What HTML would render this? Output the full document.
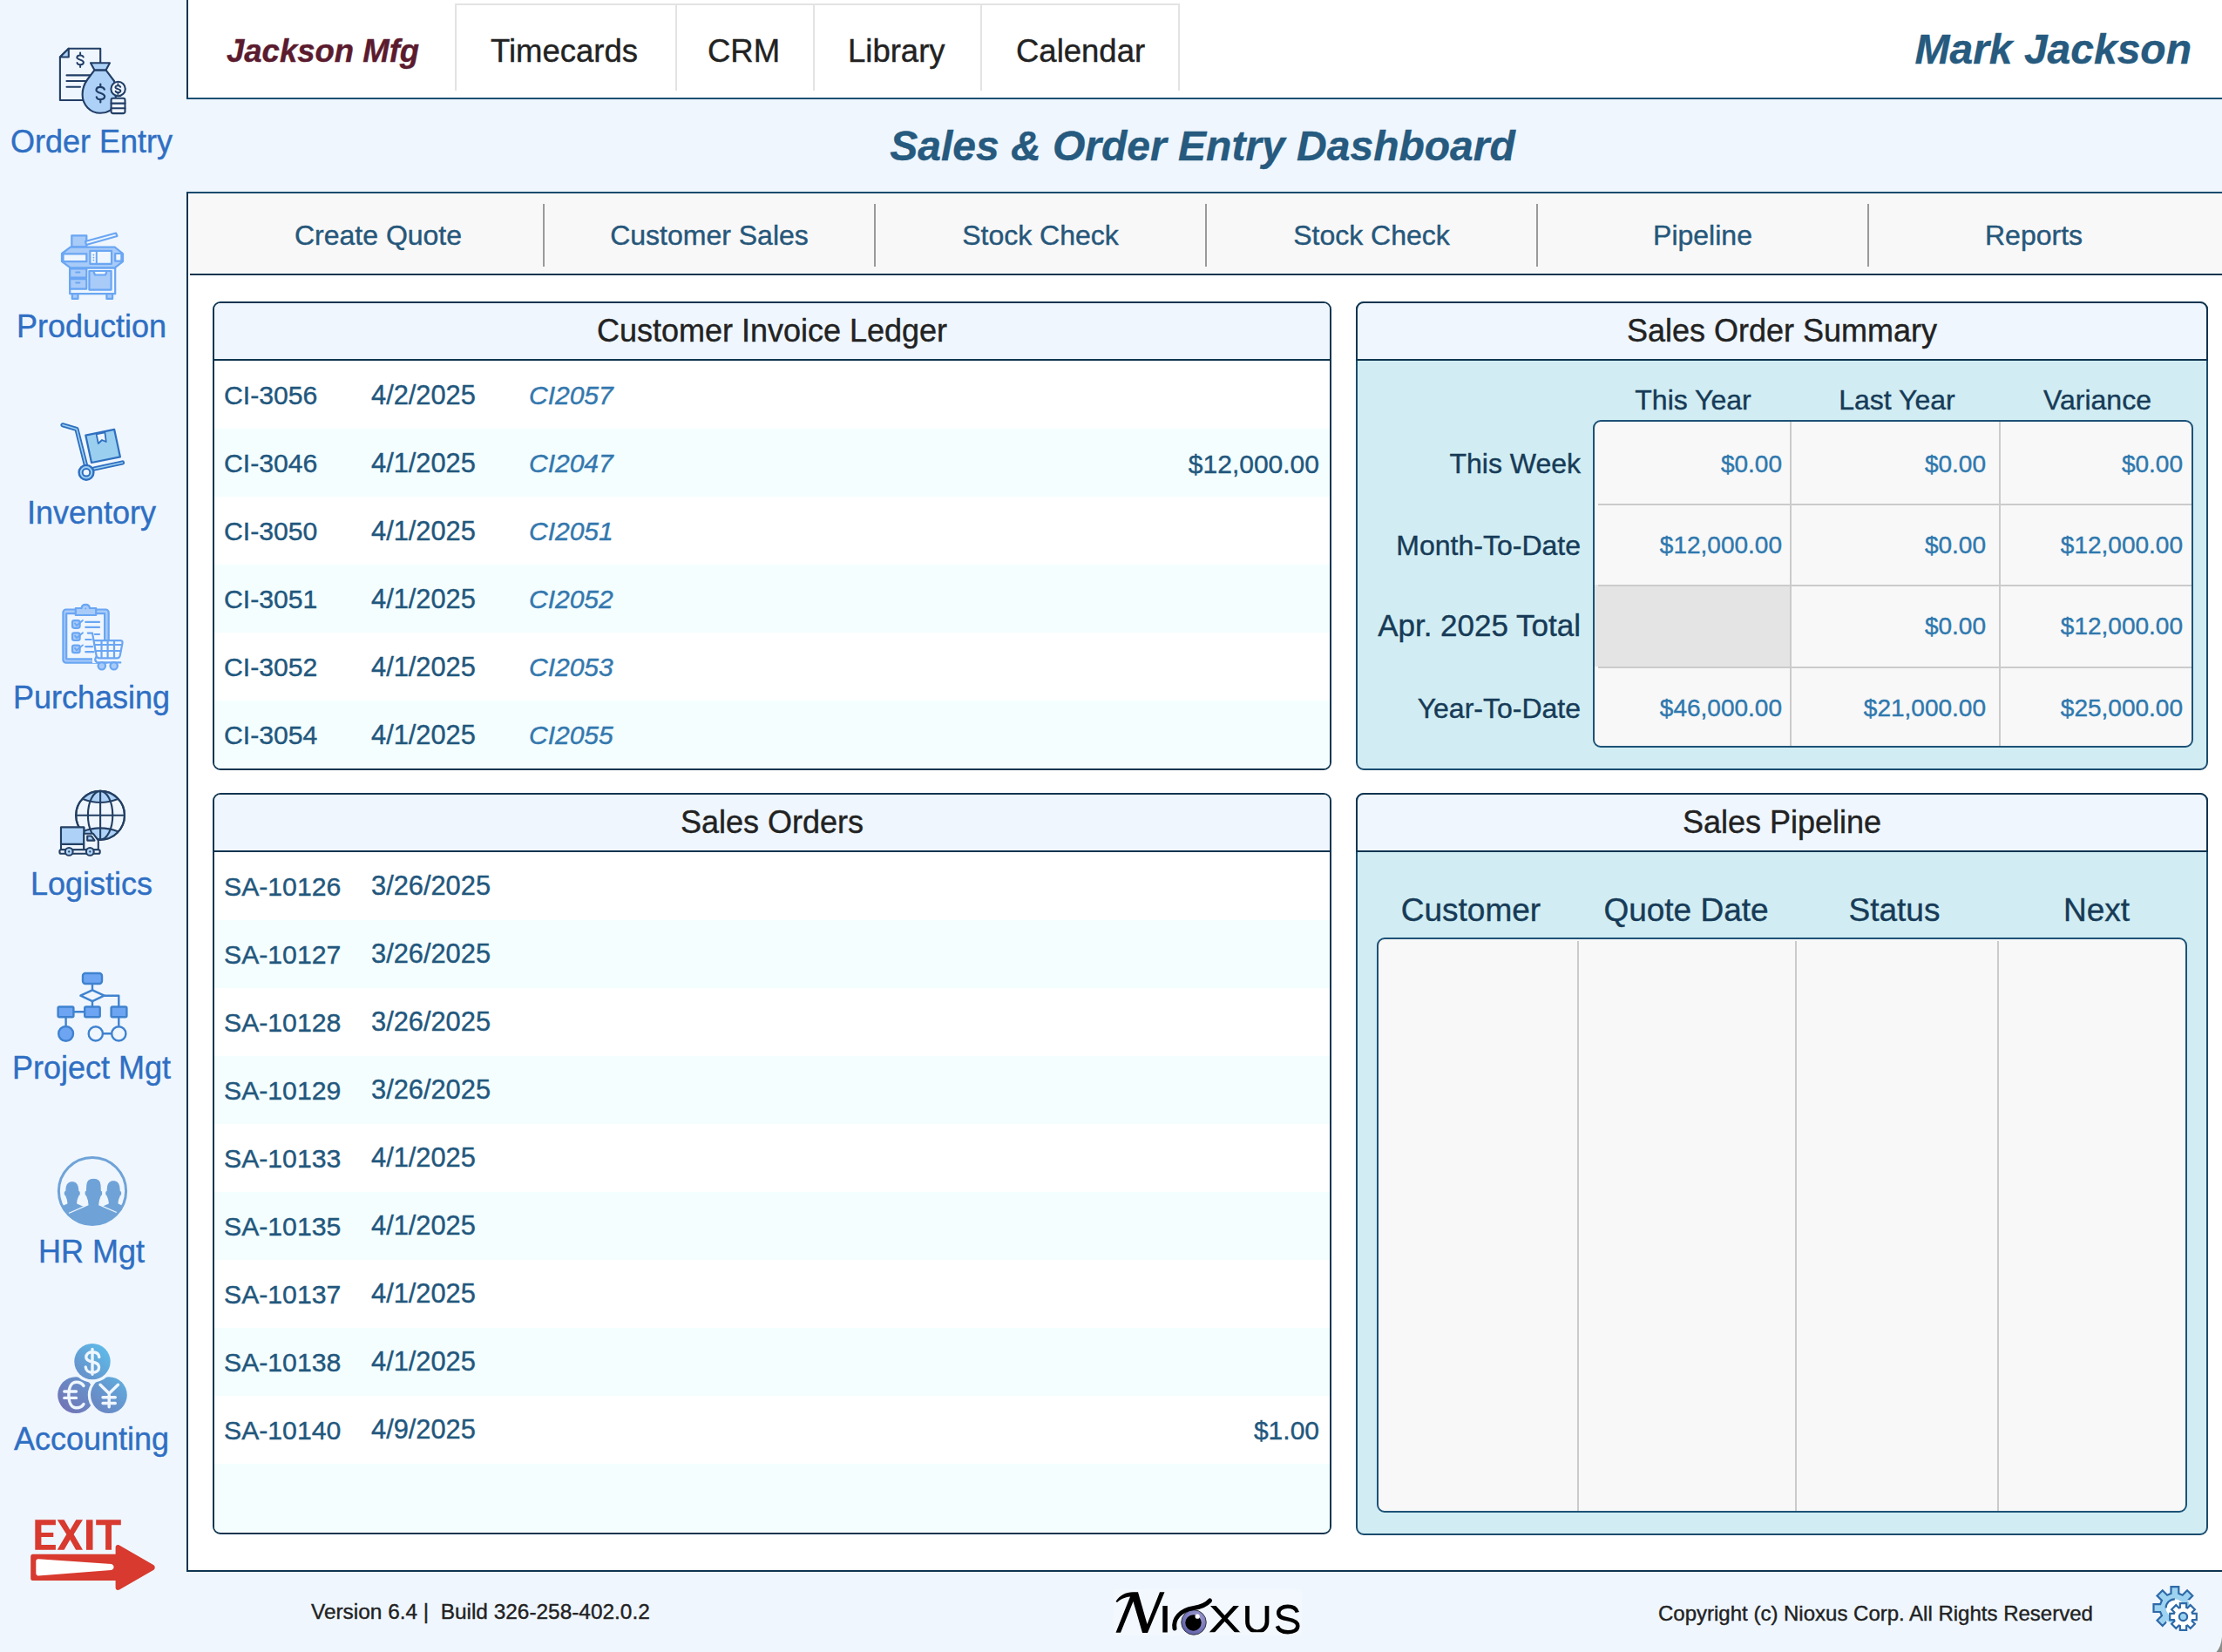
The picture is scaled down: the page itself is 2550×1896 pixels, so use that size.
<!DOCTYPE html>
<html><head><meta charset="utf-8">
<style>
html,body{margin:0;padding:0;}
body{width:2550px;height:1896px;position:relative;overflow:hidden;background:#EFF6FE;font-family:"Liberation Sans",sans-serif;}
.a{position:absolute;box-sizing:border-box;}
.t{position:absolute;white-space:nowrap;line-height:1;-webkit-text-stroke:0.4px currentColor;}
.c{text-align:center;}
.r{text-align:right;}
#hdr{left:214px;top:0;width:2336px;height:114px;background:#fff;border-left:2px solid #0F3550;border-bottom:2px solid #1D5073;}
#tabs{left:522px;top:4px;width:832px;height:100px;border:2px solid #E3E3E3;border-bottom:none;}
.tdiv{position:absolute;top:4px;width:2px;height:100px;background:#E3E3E3;}
#main{left:214px;top:220px;width:2336px;height:1584px;background:#fff;border-left:2px solid #0F3550;border-top:2px solid #164A6E;border-bottom:2px solid #0F3550;}
#nav{left:218px;top:222px;width:2332px;height:94px;background:#F8F8F8;border-bottom:2px solid #0F3550;}
.ndiv{position:absolute;top:234px;width:2px;height:72px;background:#9A9A9A;}
.pan{position:absolute;box-sizing:border-box;border:2px solid #0F3550;border-radius:9px;overflow:hidden;}
.ph{position:absolute;left:0;top:0;right:0;height:66px;background:#EFF6FE;border-bottom:2px solid #0F3550;box-sizing:border-box;}
.row{position:absolute;left:0;right:0;height:78px;}
.alt{background:#F4FEFF;}
.side{color:#2F6FC3;font-size:36px;width:214px;left:0;text-align:center;}
.tab{color:#222;font-size:36.5px;}
.nv{color:#26577A;font-size:32px;width:380px;text-align:center;}
.pt{color:#222;font-size:36px;}
.rt{color:#22577D;font-size:31px;}
.it{color:#3478AE;font-size:30px;font-style:italic;}
.sh{color:#173B57;font-size:32px;}
.sv{color:#2F78AE;font-size:28px;}
.gh{color:#173B57;font-size:37px;}
</style></head>
<body>
<!-- header -->
<div class="a" id="hdr"></div>
<div class="a" id="tabs"></div>
<div class="tdiv" style="left:775px"></div>
<div class="tdiv" style="left:933px"></div>
<div class="tdiv" style="left:1125px"></div>
<div class="t" style="left:260px;top:41px;font-size:36.5px;font-weight:bold;font-style:italic;color:#5B1B2E;">Jackson Mfg</div>
<div class="t tab" style="left:563px;top:41px;">Timecards</div>
<div class="t tab" style="left:812px;top:41px;">CRM</div>
<div class="t tab" style="left:973px;top:41px;">Library</div>
<div class="t tab" style="left:1166px;top:41px;">Calendar</div>
<div class="t r" style="right:35px;top:33px;font-size:48px;font-weight:bold;font-style:italic;color:#265A7E;">Mark Jackson</div>
<div class="t c" style="left:880px;width:1000px;top:144px;font-size:48px;font-weight:bold;font-style:italic;color:#265A7E;">Sales &amp; Order Entry Dashboard</div>

<!-- main -->
<div class="a" id="main"></div>
<div class="a" id="nav"></div>
<div class="ndiv" style="left:623px"></div>
<div class="ndiv" style="left:1003px"></div>
<div class="ndiv" style="left:1383px"></div>
<div class="ndiv" style="left:1763px"></div>
<div class="ndiv" style="left:2143px"></div>
<div class="t nv" style="left:244px;top:254px;">Create Quote</div>
<div class="t nv" style="left:624px;top:254px;">Customer Sales</div>
<div class="t nv" style="left:1004px;top:254px;">Stock Check</div>
<div class="t nv" style="left:1384px;top:254px;">Stock Check</div>
<div class="t nv" style="left:1764px;top:254px;">Pipeline</div>
<div class="t nv" style="left:2144px;top:254px;">Reports</div>

<!-- PANELS -->
<div class="pan" style="left:244px;top:346px;width:1284px;height:538px;background:#fff;">
<div class="ph"></div>
<div class="row" style="top:66px"></div>
<div class="row alt" style="top:144px"></div>
<div class="row" style="top:222px"></div>
<div class="row alt" style="top:300px"></div>
<div class="row" style="top:378px"></div>
<div class="row alt" style="top:456px"></div>
</div>
<div class="t c pt" style="left:244px;width:1284px;top:362px;">Customer Invoice Ledger</div>
<div class="t rt" style="left:257px;top:439px;font-size:30.2px;">CI-3056</div><div class="t rt" style="left:426px;top:439px;font-size:30.8px;">4/2/2025</div><div class="t it" style="left:607px;top:439px;">CI2057</div>
<div class="t rt" style="left:257px;top:517px;font-size:30.2px;">CI-3046</div><div class="t rt" style="left:426px;top:517px;font-size:30.8px;">4/1/2025</div><div class="t it" style="left:607px;top:517px;">CI2047</div><div class="t rt r" style="font-size:30px;right:1036px;top:518px;">$12,000.00</div>
<div class="t rt" style="left:257px;top:595px;font-size:30.2px;">CI-3050</div><div class="t rt" style="left:426px;top:595px;font-size:30.8px;">4/1/2025</div><div class="t it" style="left:607px;top:595px;">CI2051</div>
<div class="t rt" style="left:257px;top:673px;font-size:30.2px;">CI-3051</div><div class="t rt" style="left:426px;top:673px;font-size:30.8px;">4/1/2025</div><div class="t it" style="left:607px;top:673px;">CI2052</div>
<div class="t rt" style="left:257px;top:751px;font-size:30.2px;">CI-3052</div><div class="t rt" style="left:426px;top:751px;font-size:30.8px;">4/1/2025</div><div class="t it" style="left:607px;top:751px;">CI2053</div>
<div class="t rt" style="left:257px;top:829px;font-size:30.2px;">CI-3054</div><div class="t rt" style="left:426px;top:829px;font-size:30.8px;">4/1/2025</div><div class="t it" style="left:607px;top:829px;">CI2055</div>
<div class="pan" style="left:244px;top:910px;width:1284px;height:851px;background:#fff;">
<div class="ph"></div>
<div class="row" style="top:66px"></div>
<div class="row alt" style="top:144px"></div>
<div class="row" style="top:222px"></div>
<div class="row alt" style="top:300px"></div>
<div class="row" style="top:378px"></div>
<div class="row alt" style="top:456px"></div>
<div class="row" style="top:534px"></div>
<div class="row alt" style="top:612px"></div>
<div class="row" style="top:690px"></div>
<div class="row alt" style="top:768px"></div>
</div>
<div class="t c pt" style="left:244px;width:1284px;top:926px;">Sales Orders</div>
<div class="t rt" style="left:257px;top:1003px;font-size:30.2px;">SA-10126</div><div class="t rt" style="left:426px;top:1002px;font-size:30.8px;">3/26/2025</div>
<div class="t rt" style="left:257px;top:1081px;font-size:30.2px;">SA-10127</div><div class="t rt" style="left:426px;top:1080px;font-size:30.8px;">3/26/2025</div>
<div class="t rt" style="left:257px;top:1159px;font-size:30.2px;">SA-10128</div><div class="t rt" style="left:426px;top:1158px;font-size:30.8px;">3/26/2025</div>
<div class="t rt" style="left:257px;top:1237px;font-size:30.2px;">SA-10129</div><div class="t rt" style="left:426px;top:1236px;font-size:30.8px;">3/26/2025</div>
<div class="t rt" style="left:257px;top:1315px;font-size:30.2px;">SA-10133</div><div class="t rt" style="left:426px;top:1314px;font-size:30.8px;">4/1/2025</div>
<div class="t rt" style="left:257px;top:1393px;font-size:30.2px;">SA-10135</div><div class="t rt" style="left:426px;top:1392px;font-size:30.8px;">4/1/2025</div>
<div class="t rt" style="left:257px;top:1471px;font-size:30.2px;">SA-10137</div><div class="t rt" style="left:426px;top:1470px;font-size:30.8px;">4/1/2025</div>
<div class="t rt" style="left:257px;top:1549px;font-size:30.2px;">SA-10138</div><div class="t rt" style="left:426px;top:1548px;font-size:30.8px;">4/1/2025</div>
<div class="t rt" style="left:257px;top:1627px;font-size:30.2px;">SA-10140</div><div class="t rt" style="left:426px;top:1626px;font-size:30.8px;">4/9/2025</div><div class="t rt r" style="font-size:30px;right:1036px;top:1627px;">$1.00</div>
<div class="pan" style="left:1556px;top:346px;width:978px;height:538px;background:#D1EDF3;border-color:#1B4C6F;"></div>
<div class="a" style="left:1556px;top:346px;width:978px;height:68px;background:#EFF6FE;border:2px solid #0F3550;border-radius:9px 9px 0 0;"></div>
<div class="t c pt" style="left:1556px;width:978px;top:362px;">Sales Order Summary</div>
<div class="t c sh" style="left:1793px;width:300px;top:443px;">This Year</div>
<div class="t c sh" style="left:2027px;width:300px;top:443px;">Last Year</div>
<div class="t c sh" style="left:2257px;width:300px;top:443px;">Variance</div>
<div class="a" style="left:1828px;top:482px;width:689px;height:376px;background:#F8F8F8;border:2px solid #1D5277;border-radius:9px;overflow:hidden;"><div class="a" style="left:0;top:187px;width:224px;height:94px;background:#E4E4E4;"></div><div class="a" style="left:4px;top:94px;width:681px;height:2px;background:#CBCBCB;"></div><div class="a" style="left:4px;top:187px;width:681px;height:2px;background:#CBCBCB;"></div><div class="a" style="left:4px;top:281px;width:681px;height:2px;background:#CBCBCB;"></div><div class="a" style="left:224px;top:0;width:2px;height:372px;background:#CBCBCB;"></div><div class="a" style="left:464px;top:0;width:2px;height:372px;background:#CBCBCB;"></div></div>
<div class="t r sh" style="right:736px;top:516px;">This Week</div><div class="t r sv" style="right:505px;top:519px;">$0.00</div><div class="t r sv" style="right:271px;top:519px;">$0.00</div><div class="t r sv" style="right:45px;top:519px;">$0.00</div>
<div class="t r sh" style="right:736px;top:610px;">Month-To-Date</div><div class="t r sv" style="right:505px;top:612px;">$12,000.00</div><div class="t r sv" style="right:271px;top:612px;">$0.00</div><div class="t r sv" style="right:45px;top:612px;">$12,000.00</div>
<div class="t r sh" style="right:736px;top:700px;font-size:35px;">Apr. 2025 Total</div><div class="t r sv" style="right:271px;top:705px;">$0.00</div><div class="t r sv" style="right:45px;top:705px;">$12,000.00</div>
<div class="t r sh" style="right:736px;top:797px;">Year-To-Date</div><div class="t r sv" style="right:505px;top:799px;">$46,000.00</div><div class="t r sv" style="right:271px;top:799px;">$21,000.00</div><div class="t r sv" style="right:45px;top:799px;">$25,000.00</div>
<div class="pan" style="left:1556px;top:910px;width:978px;height:852px;background:#D1EDF3;border-color:#1B4C6F;"></div>
<div class="a" style="left:1556px;top:910px;width:978px;height:68px;background:#EFF6FE;border:2px solid #0F3550;border-radius:9px 9px 0 0;"></div>
<div class="t c pt" style="left:1556px;width:978px;top:926px;">Sales Pipeline</div>
<div class="t c gh" style="left:1538px;width:300px;top:1026px;">Customer</div>
<div class="t c gh" style="left:1785px;width:300px;top:1026px;">Quote Date</div>
<div class="t c gh" style="left:2024px;width:300px;top:1026px;">Status</div>
<div class="t c gh" style="left:2256px;width:300px;top:1026px;">Next</div>
<div class="a" style="left:1580px;top:1076px;width:930px;height:660px;background:#F8F8F8;border:2px solid #1D5277;border-radius:9px;overflow:hidden;"><div class="a" style="left:228px;top:2px;width:2px;height:656px;background:#CBCBCB;"></div><div class="a" style="left:478px;top:2px;width:2px;height:656px;background:#CBCBCB;"></div><div class="a" style="left:710px;top:2px;width:2px;height:656px;background:#CBCBCB;"></div></div>
<!-- SIDEBAR -->
<div class="t side" style="margin-left:-2px;top:145px;">Order Entry</div>
<div class="t side" style="margin-left:-2px;top:357px;">Production</div>
<div class="t side" style="margin-left:-2px;top:571px;">Inventory</div>
<div class="t side" style="margin-left:-2px;top:783px;">Purchasing</div>
<div class="t side" style="margin-left:-2px;top:997px;">Logistics</div>
<div class="t side" style="margin-left:-2px;top:1208px;">Project Mgt</div>
<div class="t side" style="margin-left:-2px;top:1419px;">HR Mgt</div>
<div class="t side" style="margin-left:-2px;top:1634px;">Accounting</div>
<div class="t" style="left:357px;top:1838px;font-size:24.4px;color:#222;">Version 6.4 |&nbsp; Build 326-258-402.0.2</div>
<div class="t" style="left:1903px;top:1840px;font-size:24px;color:#222;">Copyright (c) Nioxus Corp. All Rights Reserved</div>
<!-- ICONS -->
<svg class="a" style="left:60px;top:45px" width="94" height="95" viewBox="60 45 94 95">
<g fill="none" stroke="#223E66" stroke-width="2.1" stroke-linejoin="round" stroke-linecap="round">
<path d="M78.8 55.8 H115.2 V73"/>
<path d="M78.8 55.8 L68.9 65.5 V115 H97"/>
<path d="M68.9 65.5 H78.8 V55.8 Z" fill="#AED2F7"/>
<path d="M76.5 86.4 H106 M76.5 93 H101 M76.5 99.8 H92"/>
<path d="M108.5 80.4 L100.5 91 C96.5 96.5 94.6 102 94.6 108.5 C94.6 120.5 103.8 129.8 115.3 129.8 C123 129.8 129.8 125.5 133.5 119 L131 93 L121.5 80.4 Z" fill="#AED2F7"/>
<path d="M104 72.2 H126 L121.5 80.4 H108.5 Z" fill="#AED2F7"/>
<circle cx="135.6" cy="102" r="8.2" fill="#EFF6FE"/>
<rect x="127.6" y="112.8" width="15.9" height="17.3" rx="2" fill="#EFF6FE"/>
<path d="M127.6 118.6 H143.5 M127.6 124.3 H143.5"/>
</g>
<g fill="none" stroke="#223E66" stroke-linecap="round">
<path d="M95.71 65.50 C94.76 62.68 88.30 62.50 88.30 66.10 C88.30 68.68 95.90 68.68 95.90 71.50 C95.90 75.10 89.06 74.92 88.49 72.10 M92.10 60.60 V63.30 M92.10 74.30 V77.00" stroke-width="2"/>
<path d="M119.86 102.60 C118.66 98.84 110.50 98.60 110.50 103.40 C110.50 106.84 120.10 106.84 120.10 110.60 C120.10 115.40 111.46 115.16 110.74 111.40 M115.30 96.60 V99.50 M115.30 114.50 V117.40" stroke-width="2.2"/>
<path d="M138.25 99.84 C137.50 97.81 132.40 97.69 132.40 100.27 C132.40 102.11 138.40 102.11 138.40 104.14 C138.40 106.72 133.00 106.59 132.55 104.56 M135.40 96.30 V98.40 M135.40 106.00 V108.10" stroke-width="1.9"/>
</g>
</svg>
<svg class="a" style="left:62px;top:258px" width="90" height="90" viewBox="62 258 90 90">
<g stroke="#6AA6F3" stroke-width="2.2" stroke-linejoin="round" fill="#A8CBF8">
<rect x="82.3" y="270.3" width="17" height="13" />
<path d="M98 277 L133 267.5 L134.5 271 L99 281 Z" fill="#EFF6FE"/>
<rect x="80.2" y="307.4" width="52" height="29.8" fill="#EFF6FE"/>
<path d="M80.8 283.7 H131.7 L141 291 V300.2 L131.7 307.4 H80.8 L71 300.2 V291 Z"/>
<rect x="72.5" y="291.4" width="26.8" height="8.8" fill="#EFF6FE"/>
<rect x="103.4" y="287.8" width="24.6" height="15" fill="#EFF6FE"/>
<rect x="111.9" y="289.9" width="14.5" height="11" fill="#EFF6FE" stroke="none"/>
<rect x="104.9" y="289.9" width="4.8" height="11" fill="#EFF6FE" stroke="none"/>
<path d="M110.8 288.5 V302" fill="none" stroke-width="2"/>
<g fill="#6AA6F3" stroke="none"><circle cx="107.4" cy="292.6" r="0.9"/><circle cx="107.4" cy="295.6" r="0.9"/><circle cx="107.4" cy="298.6" r="0.9"/></g>
<rect x="132.2" y="291" width="7.2" height="8.7" fill="#EFF6FE"/>
<rect x="80.2" y="308.4" width="19.1" height="10.3"/>
<rect x="80.2" y="320.2" width="19.1" height="11.4"/>
<rect x="102.4" y="311" width="25.2" height="21.6"/>
<path d="M87.3 312.5 H91.3 M87.3 324.5 H91.3" fill="none" stroke-linecap="round"/>
<path d="M107.6 312 L109 315.5 H121 L122.4 312" fill="#EFF6FE"/>
<rect x="82.8" y="337.2" width="6.7" height="5.7"/>
<rect x="122.4" y="337.2" width="6.7" height="5.7"/>
</g>
</svg>
<svg class="a" style="left:62px;top:478px" width="90" height="82" viewBox="62 478 90 82">
<g fill="none" stroke-linecap="round" stroke-linejoin="round">
<path d="M72 487.8 L88 492.6 L98.5 534 M108 538 L140.5 531" stroke="#2F6FC0" stroke-width="5.2"/>
<path d="M72 487.8 L88 492.6 L98.5 534 M108 538 L140.5 531" stroke="#9ACFF0" stroke-width="1.6"/>
<path d="M98.3 499.6 L131.2 492.9 L137.9 524.3 L105 531 Z" fill="#9ACFF0" stroke="#2F6FC0" stroke-width="2.2"/>
<path d="M110.6 498.3 L120.4 496.3 L121.8 507 L117 505 L112.8 509 Z" fill="#EFF6FE" stroke="#2F6FC0" stroke-width="1.8"/>
<circle cx="99" cy="542.3" r="8.4" fill="#9ACFF0" stroke="#2F6FC0" stroke-width="2.4"/>
<circle cx="99" cy="542.3" r="4.3" fill="#EFF6FE" stroke="#2F6FC0" stroke-width="2"/>
</g>
</svg>
<svg class="a" style="left:62px;top:686px" width="90" height="86" viewBox="62 686 90 86">
<g stroke="#6AA6F3" stroke-width="2.2" stroke-linejoin="round" stroke-linecap="round">
<rect x="72.4" y="699.5" width="52.3" height="61.2" rx="3.5" fill="#A8CBF8"/>
<rect x="76.2" y="704.1" width="43.9" height="52.2" fill="#EFF6FE"/>
<path d="M86.8 698 H93.5 A4.8 4.8 0 0 1 103 698 H110.2 V706 H86.8 Z" fill="#A8CBF8"/>
<circle cx="98.3" cy="698.3" r="0.9" fill="#6AA6F3" stroke="none"/>
<g fill="#A8CBF8">
<rect x="83" y="712.2" width="8.6" height="8.6" rx="2.2"/>
<rect x="83" y="726.4" width="8.6" height="8.6" rx="2.2"/>
<rect x="83" y="740.6" width="8.6" height="8.6" rx="2.2"/>
</g>
<path d="M86 715.5 L88 718 L95 712 M86 729.7 L88 732.2 L95 726.2 M86 743.9 L88 746.4 L95 740.4" fill="none" stroke-width="1.9"/>
<path d="M98.3 713.9 H114 M98.3 719.9 H114 M108.9 728 H114 M98.3 734 H104.8 M98.3 742.2 H106 M98.3 748.2 H107.5" fill="none"/>
<rect x="106" y="752.5" width="34" height="8.5" fill="#EFF6FE" stroke="none"/>
<path d="M100.8 726.6 H106 L110.5 752 Q111 755.3 114 755.3 H134.5 Q137 755.3 137.7 752.5 L140.5 738 Q141 735.1 138 735.1 H107.5" fill="#EFF6FE"/>
<path d="M108.5 740 H139.8 M109.5 747 H138.5 M116.5 735.5 V755 M123.6 735.5 V755 M131 735.5 V755" fill="none"/>
<path d="M110.3 754 Q107.8 757.8 111.5 760.4 H138.3" fill="none"/>
<circle cx="116.8" cy="764.3" r="4.2" fill="#A8CBF8"/>
<circle cx="130.7" cy="764.3" r="4.2" fill="#A8CBF8"/>
</g>
</svg>
<svg class="a" style="left:62px;top:900px" width="90" height="86" viewBox="62 900 90 86">
<g stroke="#233F63" stroke-width="2.1" stroke-linejoin="round" stroke-linecap="round">
<clipPath id="gclip"><circle cx="115.1" cy="935.8" r="27.9"/></clipPath>
<circle cx="115.1" cy="935.8" r="27.9" fill="#EFF6FE"/>
<g clip-path="url(#gclip)" stroke="none">
<path d="M95 917 Q115.1 925 135.2 917 L150 900 H80 Z" fill="#AED2F7"/>
<path d="M95 954.2 Q115.1 946.5 135.2 954.2 L150 975 H80 Z" fill="#AED2F7"/>
</g>
<circle cx="115.1" cy="935.8" r="27.9" fill="none"/>
<ellipse cx="115.1" cy="935.8" rx="14.2" ry="27.9" fill="none"/>
<path d="M115.1 908 V963.7 M87.2 935.8 H143" fill="none"/>
<path d="M95 917 Q115.1 925 135.2 917 M95 954.2 Q115.1 946.5 135.2 954.2" fill="none"/>
<rect x="70" y="949.5" width="26.3" height="25.7" fill="#EFF6FE"/>
<rect x="70" y="949.5" width="26.3" height="19.4" fill="#AED2F7"/>
<path d="M96.3 956.8 H107 L112.8 964.5 V975.2 H96.3 Z" fill="#EFF6FE"/>
<path d="M100.2 959.5 H105 L108.5 964.6 H100.2 Z" fill="#AED2F7"/>
<rect x="68.4" y="975.3" width="46.3" height="4.4" rx="1.8" fill="#EFF6FE"/>
<circle cx="79.2" cy="977.4" r="4.4" fill="#AED2F7"/>
<circle cx="103.3" cy="977.4" r="4.4" fill="#AED2F7"/>
<circle cx="79.2" cy="977.4" r="1.1" fill="#233F63" stroke="none"/>
<circle cx="103.3" cy="977.4" r="1.1" fill="#233F63" stroke="none"/>
</g>
</svg>
<svg class="a" style="left:60px;top:1110px" width="94" height="90" viewBox="60 1110 94 90">
<g stroke="#3F82CF" stroke-width="2.4" stroke-linejoin="round" fill="#6EA5F2">
<rect x="95" y="1117" width="22" height="12" rx="3"/>
<path d="M106 1129 V1136 M106 1149 V1155.3 M119.5 1142.7 H136.3 V1155.3 M84.4 1161.2 H97.2 M75.6 1167.2 V1177.5 M136.3 1167.2 V1177.5 M117.9 1186.2 H128" fill="none"/>
<path d="M92.4 1142.7 L106 1136.3 L119.6 1142.7 L106 1149.1 Z" fill="#EFF6FE"/>
<rect x="66.6" y="1155.5" width="17.8" height="11.7" rx="1.5"/>
<rect x="97.2" y="1155.5" width="17.5" height="11.7" rx="1.5"/>
<rect x="127.6" y="1155.5" width="17.8" height="11.7" rx="1.5"/>
<circle cx="75.6" cy="1186.4" r="8.4"/>
<circle cx="109.8" cy="1186.4" r="8.1" fill="#EFF6FE"/>
<circle cx="136.3" cy="1186.4" r="8.1" fill="#EFF6FE"/>
</g>
</svg>
<svg class="a" style="left:60px;top:1320px" width="94" height="94" viewBox="60 1320 94 94">
<defs><clipPath id="hclip"><circle cx="106" cy="1367" r="38.4"/></clipPath></defs>
<g clip-path="url(#hclip)" fill="#6FA3D8">
<path d="M75.50 1364.20 C75.90 1358.70 78.78 1356.20 82.80 1356.20 C86.81 1356.20 89.70 1358.70 90.10 1364.20 L90.40 1367.00 C92.40 1367.30 92.20 1372.00 90.30 1372.50 C89.70 1375.00 88.20 1376.60 88.20 1381.60 L118.20 1394.60 V1420 H47.40 V1394.60 L77.40 1381.60 C77.40 1376.60 75.90 1375.00 75.30 1372.50 C73.40 1372.00 73.20 1367.30 75.20 1367.00 Z"/>
<path d="M122.90 1363.30 C123.30 1357.80 126.18 1355.30 130.20 1355.30 C134.21 1355.30 137.10 1357.80 137.50 1363.30 L137.80 1367.00 C139.80 1367.30 139.60 1372.00 137.70 1372.50 C137.10 1375.00 135.60 1376.60 135.60 1381.60 L165.60 1394.60 V1420 H94.80 V1394.60 L124.80 1381.60 C124.80 1376.60 123.30 1375.00 122.70 1372.50 C120.80 1372.00 120.60 1367.30 122.60 1367.00 Z"/>
<path d="M98.60 1360.20 C99.00 1354.70 102.56 1352.20 107.40 1352.20 C112.24 1352.20 115.80 1354.70 116.20 1360.20 L116.50 1366.30 C118.40 1366.60 118.20 1372.30 116.40 1372.80 C115.40 1375.30 113.90 1377.80 113.90 1382.80 L153.90 1400.30 V1420 H60.90 V1400.30 L100.90 1382.80 C100.90 1377.80 99.40 1375.30 98.40 1372.80 C96.60 1372.30 96.40 1366.60 98.30 1366.30 Z" stroke="#EFF6FE" stroke-width="1.3"/>
</g>
<circle cx="106" cy="1367" r="38.6" fill="none" stroke="#6FA3D8" stroke-width="3"/>
</svg>
<svg class="a" style="left:60px;top:1535px" width="94" height="94" viewBox="60 1535 94 94">
<defs>
<linearGradient id="cg2" x1="70" y1="1622" x2="140" y2="1545" gradientUnits="userSpaceOnUse">
<stop offset="0" stop-color="#7271B4"/><stop offset="0.5" stop-color="#6596CE"/><stop offset="1" stop-color="#5CC8F2"/></linearGradient>
<mask id="mL" maskUnits="userSpaceOnUse" x="60" y="1535" width="94" height="94"><rect x="60" y="1535" width="94" height="94" fill="#fff"/><circle cx="124.9" cy="1601.1" r="24.1" fill="#000"/><circle cx="106" cy="1562.6" r="24.1" fill="#000"/></mask>
<mask id="mR" maskUnits="userSpaceOnUse" x="60" y="1535" width="94" height="94"><rect x="60" y="1535" width="94" height="94" fill="#fff"/><circle cx="106" cy="1562.6" r="24.1" fill="#000"/></mask>
</defs>
<g fill="url(#cg2)">
<circle cx="106" cy="1562.6" r="20.7"/>
<circle cx="87.1" cy="1601.1" r="20.9" mask="url(#mL)"/>
<circle cx="124.9" cy="1601.1" r="20.9" mask="url(#mR)"/>
</g>
<g fill="none" stroke="#EFF6FE" stroke-width="3.4" stroke-linecap="round" stroke-linejoin="round">
<path d="M113.8 1557.5 C113.3 1553.5 110 1551.8 106 1551.8 C101.5 1551.8 98.8 1554.5 98.8 1557.8 C98.8 1561.5 102.5 1562.3 106 1563 C110 1563.8 113.6 1565 113.6 1569.2 C113.6 1573 110.5 1575.2 106 1575.2 C101.5 1575.2 98.5 1572.8 98.3 1569 M106 1548.5 V1577.3"/>
<path d="M96 1590.5 C94.3 1587.8 91.3 1586.2 87.8 1586.2 C81.8 1586.2 78.9 1592.5 78.9 1601.1 C78.9 1609.7 81.8 1615.8 87.8 1615.8 C91.3 1615.8 94.3 1614.2 96 1611.5 M73.8 1597 H87.5 M73.8 1604.4 H87.5"/>
<path d="M115 1589.3 L125.2 1599.3 L135.5 1589.3 M125.2 1599.3 V1614.8 M118 1603.7 H132.3 M118 1610.5 H132.3"/>
</g>
</svg>
<svg class="a" style="left:30px;top:1740px" width="152" height="90" viewBox="30 1740 152 90">
<g fill="#D83A2F">
<path d="M40.3 1744.3 H63.9 V1750.2 H47.4 V1758.9 H61.3 V1763.9 H47.4 V1773 H63.9 V1778.8 H40.3 Z"/>
<path d="M65.7 1744.3 H73.6 L80.4 1756 L87.3 1744.3 H95 L84.6 1761 L95 1778.8 H87.1 L80.4 1767 L73.6 1778.8 H65.7 L76.3 1761 Z"/>
<rect x="99" y="1744.3" width="7.5" height="34.5"/>
<path d="M110.2 1744.3 H138.8 V1750.2 H128 V1778.8 H121.1 V1750.2 H110.2 Z"/>
<path d="M37.5 1783.7 H132.6 V1776 C132.6 1773.5 134.8 1772.3 137 1773.5 L176 1796 C178.3 1797.3 178.3 1800.7 176 1802 L137 1824.5 C134.8 1825.7 132.6 1824.5 132.6 1822 V1814 H37.5 C36.2 1814 35.2 1813 35.2 1811.7 V1786 C35.2 1784.7 36.2 1783.7 37.5 1783.7 Z"/>
</g>
<path d="M44 1789.2 L127.5 1795 C129.5 1795.2 130.5 1797 130.5 1798.5 C130.5 1800 129.5 1801.8 127.5 1802 L44 1808.4 C42.5 1808.5 41.3 1807.3 41.3 1805.8 V1791.8 C41.3 1790.3 42.5 1789.1 44 1789.2 Z" fill="#fff"/>
</svg>
<svg class="a" style="left:2460px;top:1810px" width="90" height="86" viewBox="2460 1810 90 86">
<defs><mask id="gk" maskUnits="userSpaceOnUse" x="2460" y="1810" width="90" height="86"><rect x="2460" y="1810" width="90" height="86" fill="#fff"/><circle cx="2505.5" cy="1855.5" r="20.3" fill="#000"/></mask></defs>
<path d="M2491.50 1828.87 L2491.50 1821.20 L2500.30 1821.20 L2500.30 1828.87 L2504.62 1830.66 L2510.04 1825.24 L2516.26 1831.46 L2510.84 1836.88 L2512.63 1841.20 L2512.63 1841.20 L2512.63 1850.00 L2512.63 1850.00 L2510.84 1854.32 L2510.84 1854.32 L2504.62 1860.54 L2504.62 1860.54 L2500.30 1862.33 L2500.30 1862.33 L2491.50 1862.33 L2491.50 1862.33 L2487.18 1860.54 L2481.76 1865.96 L2475.54 1859.74 L2480.96 1854.32 L2479.17 1850.00 L2471.50 1850.00 L2471.50 1841.20 L2479.17 1841.20 L2480.96 1836.88 L2475.54 1831.46 L2481.76 1825.24 L2487.18 1830.66 Z" fill="#9DD3F0" mask="url(#gk)"/>
<circle cx="2495.9" cy="1845.6" r="17.3" fill="#9DD3F0"/>
<path d="M2491.50 1828.87 L2491.50 1821.20 L2500.30 1821.20 L2500.30 1828.87 L2504.62 1830.66 L2510.04 1825.24 L2516.26 1831.46 L2510.84 1836.88 L2512.63 1841.20 L2512.63 1841.20 L2512.63 1850.00 L2512.63 1850.00 L2510.84 1854.32 L2510.84 1854.32 L2504.62 1860.54 L2504.62 1860.54 L2500.30 1862.33 L2500.30 1862.33 L2491.50 1862.33 L2491.50 1862.33 L2487.18 1860.54 L2481.76 1865.96 L2475.54 1859.74 L2480.96 1854.32 L2479.17 1850.00 L2471.50 1850.00 L2471.50 1841.20 L2479.17 1841.20 L2480.96 1836.88 L2475.54 1831.46 L2481.76 1825.24 L2487.18 1830.66 Z" fill="none" stroke="#2E6AA8" stroke-width="2.2" mask="url(#gk)"/>
<circle cx="2495.9" cy="1845.6" r="10.3" fill="#fff"/>
<path d="M2485.6 1845.6 A10.3 10.3 0 0 1 2495.9 1835.3" fill="none" stroke="#2E6AA8" stroke-width="2.2"/>
<path d="M2501.85 1844.91 L2501.85 1840.20 L2509.15 1840.20 L2509.15 1844.91 L2510.41 1845.43 L2513.74 1842.10 L2518.90 1847.26 L2515.57 1850.59 L2516.09 1851.85 L2520.80 1851.85 L2520.80 1859.15 L2516.09 1859.15 L2515.57 1860.41 L2518.90 1863.74 L2513.74 1868.90 L2510.41 1865.57 L2509.15 1866.09 L2509.15 1870.80 L2501.85 1870.80 L2501.85 1866.09 L2500.59 1865.57 L2497.26 1868.90 L2492.10 1863.74 L2495.43 1860.41 L2494.91 1859.15 L2490.20 1859.15 L2490.20 1851.85 L2494.91 1851.85 L2495.43 1850.59 L2492.10 1847.26 L2497.26 1842.10 L2500.59 1845.43 Z" fill="#fff" stroke="#2E6AA8" stroke-width="2.2"/>
<circle cx="2505.5" cy="1855.5" r="4.6" fill="#9DD3F0" stroke="#2E6AA8" stroke-width="2.2"/>
<path d="M2550 1878.5 Q2549 1890 2543.5 1896 H2550 Z" fill="#8B8D89"/>
</svg>
<svg class="a" style="left:1276px;top:1822px" width="220" height="58" viewBox="1276 1822 220 58">
<defs><radialGradient id="iris" cx="0.6" cy="0.35" r="0.7"><stop offset="0" stop-color="#A9A6D8"/><stop offset="1" stop-color="#5B5BA6"/></radialGradient></defs>
<rect x="1278" y="1824" width="216" height="53" fill="#F2F8FE"/>
<path d="M1280.5 1838 C1285 1831 1292 1827.3 1300 1827.3 L1306 1827.3 L1316.5 1864 L1331 1827.3 L1336.5 1827.3 L1317 1874 L1311 1874 L1300.5 1838 L1286 1873.8 L1280.5 1873.8 L1297 1832.5 C1291 1833 1285 1836 1282 1839 Z" fill="#000"/>
<rect x="1334.3" y="1843" width="5.5" height="30.5" fill="#000"/>
<circle cx="1370" cy="1862" r="14.3" fill="url(#iris)" stroke="#222" stroke-width="0.8"/>
<circle cx="1369.5" cy="1862.5" r="9.2" fill="#000"/>
<circle cx="1374.2" cy="1855.2" r="2.6" fill="#fff"/>
<path d="M1348 1869 C1346 1858 1354 1848 1370 1845.5 C1380 1844 1385 1841 1388.5 1837" fill="none" stroke="#000" stroke-width="5" stroke-linecap="round"/>
<defs><clipPath id="lclip"><rect x="1380" y="1843" width="120" height="30.3"/></clipPath></defs>
<g fill="none" stroke="#000" stroke-width="4.7" clip-path="url(#lclip)">
<path d="M1389.5 1840 L1422.5 1876 M1421.5 1840 L1388.5 1876"/>
<path d="M1431.5 1840 V1861.5 A11.25 11.25 0 0 0 1454 1861.5 V1840"/>
</g>
<path d="M1488.8 1850.5 C1487.5 1846 1483 1843.8 1477.8 1843.8 C1471.5 1843.8 1467.2 1846.8 1467.2 1851.2 C1467.2 1856 1472 1857.3 1478 1858.4 C1484.8 1859.6 1489.3 1861.5 1489.3 1866 C1489.3 1870.8 1484.5 1873.2 1478 1873.2 C1471.8 1873.2 1467.3 1870.8 1465.8 1866.3" fill="none" stroke="#000" stroke-width="4.5"/>
</svg>

</body></html>
